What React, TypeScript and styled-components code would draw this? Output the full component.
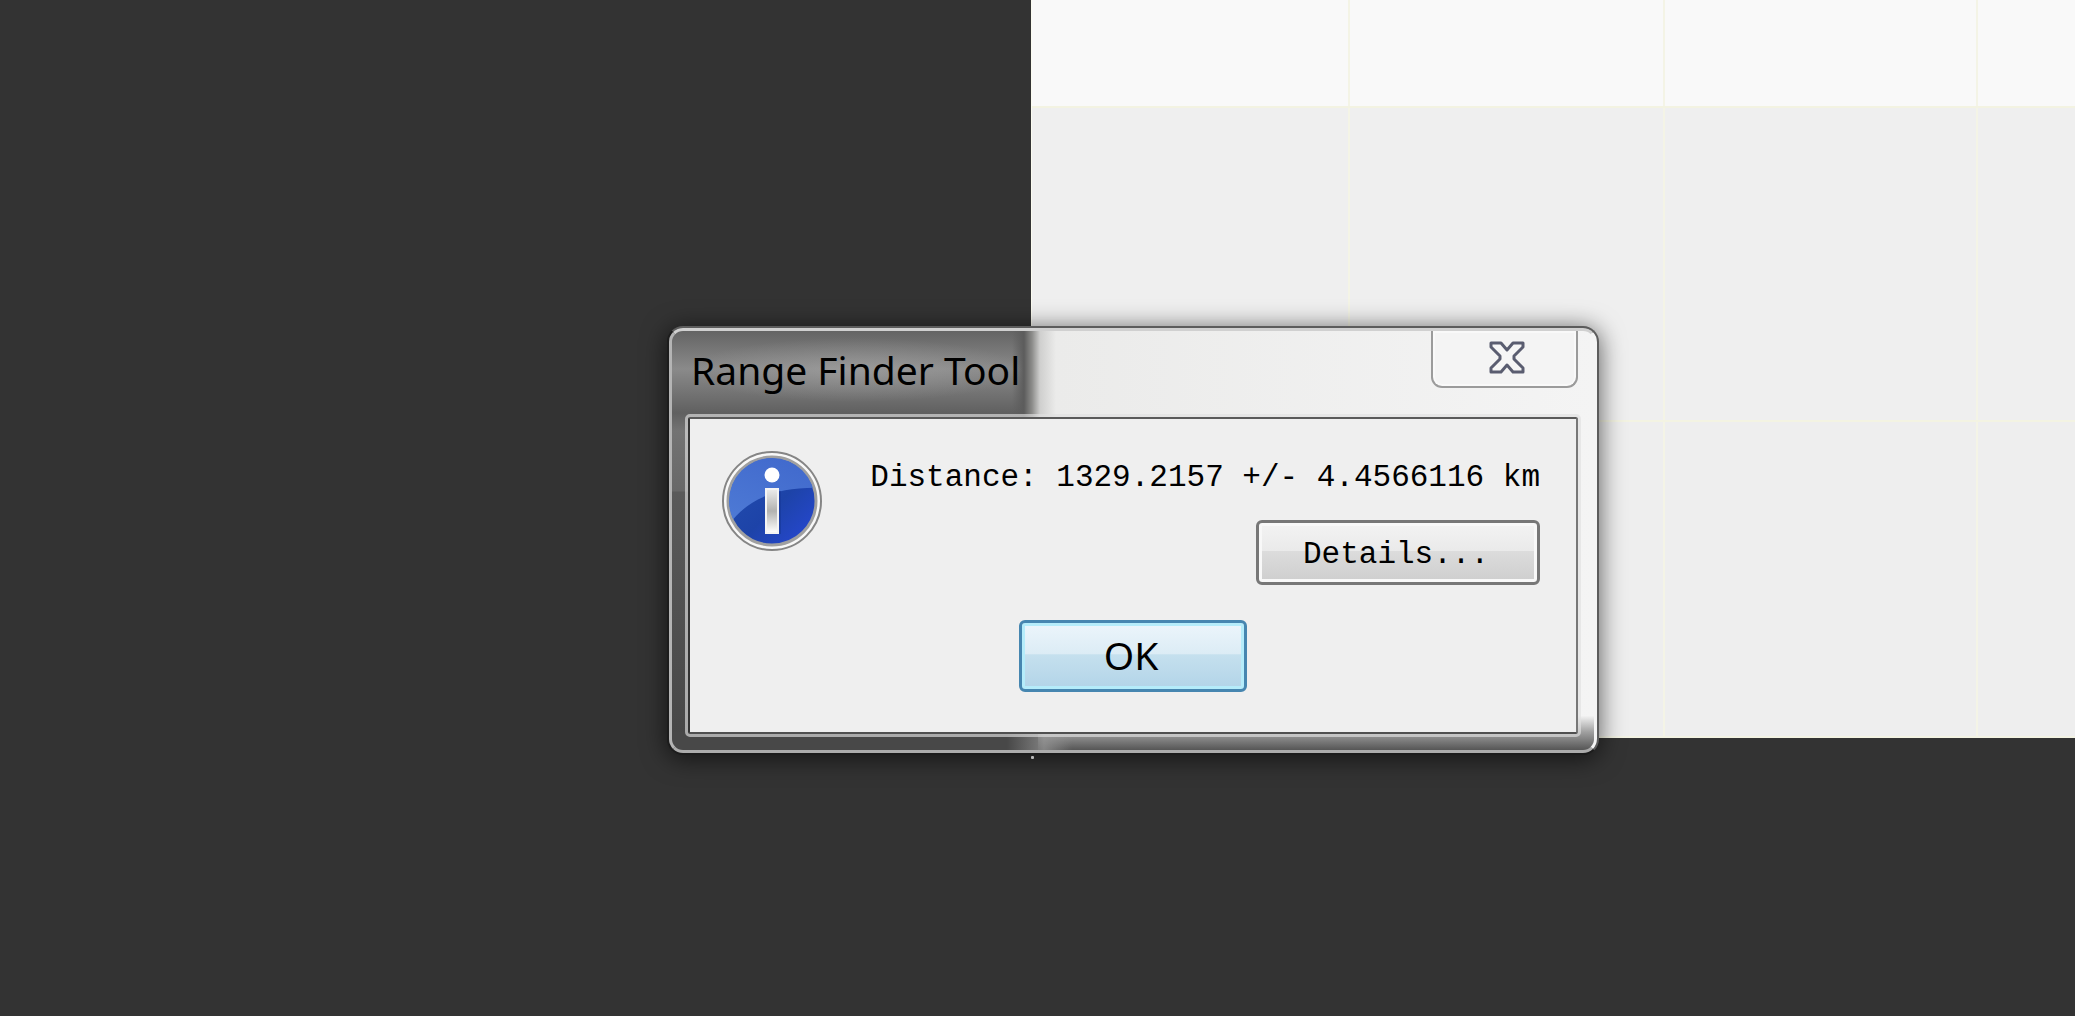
import React from 'react';
import styled, { createGlobalStyle } from 'styled-components';

const GlobalStyle = createGlobalStyle`
  *, *::before, *::after { box-sizing: border-box; }
  body { margin: 0; background: #333333; }
`;

const uiFont = "'Noto Sans', 'Open Sans', sans-serif";
const monoFont = "'Liberation Mono', 'Noto Sans CJK SC', monospace";

const Desktop = styled.main`
  position: relative;
  min-height: 100vh;
  display: grid;
  grid-template-columns: 1031px 1fr;
  align-items: start;
  overflow: hidden;
  background: #333333;
`;

const MapCanvas = styled.section`
  grid-column: 2;
  height: 738px;
  display: grid;
  grid-template-rows: 106px 314px 1fr;
  background: #efefef;
  border-left: 1px solid #fbfbf0;
  border-bottom: 2px solid #f3f3e4;
`;

const MapRow = styled.div<{ $tone: string }>`
  display: grid;
  grid-template-columns: 316px 315px 313px 1fr;
  background: ${(p) => p.$tone};
  & + & { border-top: 2px solid #f3f3e2; }
`;

const MapTile = styled.div`
  & + & { border-left: 2px solid #f4f4e6; }
`;

const MapDot = styled.span`
  position: absolute;
  left: 1031px;
  top: 756px;
  width: 3px;
  height: 3px;
  border-radius: 1px;
  background: #b8b8b8;
`;

const Window = styled.section`
  position: absolute;
  left: 667px;
  top: 326px;
  width: 932px;
  border: 2px solid;
  border-color: #5c5c5c #5c5c5c #1c1c1c #1c1c1c;
  border-radius: 16px;
  box-shadow: 0 3px 24px 1px rgba(0, 0, 0, 0.6);
  background: #1c1c1c;
`;

const Glass = styled.div`
  overflow: hidden;
  border: 3px solid;
  border-color: #d0d0d0 #f4f4f4 #acacac #b4b4b4;
  border-radius: 14px;
  padding: 0 16px 16px 16px;
  background:
    linear-gradient(to right, #484848 0, #484848 335px, rgba(150, 150, 150, 0.7) 372px, transparent 400px)
      bottom / 100% 18px no-repeat,
    linear-gradient(to right, rgba(88, 88, 88, 0) 340px, #5c5c5c 352px, #8c8c8a 360px, #cfcfce 368px, #ebebea 384px, #f4f4f4 100%)
      top / 100% calc(100% - 34px) no-repeat,
    linear-gradient(to bottom, #f2f2f2 0, #a0a0a0 16px, #565656 34px) right bottom / calc(100% - 366px) 34px no-repeat,
    linear-gradient(to bottom, #646464 0, #8a8a8a 38px, #606060 82px, #737373 100px, #686868 160px, #5a5a5a 161px, #464646 100%);
`;

const TitleBar = styled.header`
  display: flex;
  align-items: flex-start;
  justify-content: space-between;
  height: 86px;
`;

const Title = styled.h1`
  margin: 7px 0 0;
  padding: 0 3px;
  font: 400 39px/64px ${uiFont};
  color: #000;
  white-space: nowrap;
  background: radial-gradient(closest-side, rgba(170, 170, 170, 0.5), rgba(150, 150, 150, 0));
`;

const CloseButton = styled.button`
  width: 147px;
  height: 57px;
  padding: 0 0 2px 4px;
  display: flex;
  align-items: center;
  justify-content: center;
  border: 2px solid #9b9b9b;
  border-top: 0;
  border-radius: 0 0 11px 11px;
  background: #f4f4f4;
  box-shadow: inset 0 0 0 2px #f9f9f9;
`;

const Client = styled.div`
  border: 2px solid;
  border-color: #5a5a5a #777777 #505050 #333333;
  outline: 3px solid rgba(225, 225, 225, 0.65);
  border-radius: 2px;
  padding: 31px 36px 40px 31px;
  background: #efefef;
`;

const Message = styled.div`
  display: flex;
  align-items: flex-start;
  justify-content: space-between;
`;

const MessageBody = styled.div`
  display: flex;
  flex-direction: column;
  align-items: flex-end;
  padding-top: 2px;
`;

const Distance = styled.p`
  margin: 0;
  font: 400 31px/52px ${monoFont};
  color: #000;
  white-space: nowrap;
`;

const PushButton = styled.button<{ $primary?: boolean }>`
  display: block;
  width: ${(p) => (p.$primary ? 228 : 284)}px;
  height: ${(p) => (p.$primary ? 72 : 65)}px;
  margin: ${(p) => (p.$primary ? '35px 0 0 298px' : '16px 0 0')};
  padding: ${(p) => (p.$primary ? '0 4px 2px 0' : '4px 4px 0 0')};
  border: 3px solid ${(p) => (p.$primary ? '#4686b0' : '#777777')};
  border-radius: 6px;
  color: #000;
  font: ${(p) => (p.$primary ? `400 39px/60px ${uiFont}` : `400 31px/52px ${monoFont}`)};
  box-shadow: inset 0 0 0 3px ${(p) => (p.$primary ? '#b5ecfa' : '#f8f8f8')};
  background: ${(p) =>
    p.$primary
      ? 'linear-gradient(#ecf5fb, #dcecf5 47%, #c5e0ee 48%, #b2d4e8)'
      : 'linear-gradient(#f3f3f3, #eaeaea 47%, #dcdcdc 48%, #cecece)'};
`;

const InfoIcon = () => (
  <svg width="102" height="102" viewBox="0 0 102 102" role="img" aria-label="Information">
    <defs>
      <linearGradient id="disc" x1="0" y1="0" x2="1" y2="1">
        <stop offset="0" stopColor="#2450b0" />
        <stop offset="0.55" stopColor="#1d43a8" />
        <stop offset="1" stopColor="#2848d8" />
      </linearGradient>
      <linearGradient id="shine" x1="0.2" y1="1" x2="0.7" y2="0">
        <stop offset="0" stopColor="#4f7cd6" />
        <stop offset="1" stopColor="#4068cc" />
      </linearGradient>
      <linearGradient id="stem" x1="0" y1="0" x2="0" y2="1">
        <stop offset="0" stopColor="#ececec" />
        <stop offset="0.5" stopColor="#b2b2b0" />
        <stop offset="1" stopColor="#ffffff" />
      </linearGradient>
      <clipPath id="discClip"><circle cx="51" cy="51" r="43" /></clipPath>
    </defs>
    <circle cx="51" cy="51" r="49" fill="#f8f8f8" stroke="#858585" strokeWidth="2" />
    <circle cx="51" cy="51" r="44" fill="url(#disc)" stroke="#a0a0a0" strokeWidth="3" />
    <g clipPath="url(#discClip)">
      <path d="M0 86C18 57 42 36 102 38V0H0Z" fill="url(#shine)" />
    </g>
    <rect x="46" y="41" width="14" height="43" fill="#17399a" opacity="0.65" />
    <rect x="45" y="39" width="12" height="44" fill="url(#stem)" stroke="#f4f4f4" strokeWidth="2" />
    <circle cx="51" cy="25" r="7.5" fill="#ffffff" />
  </svg>
);

const CloseIcon = () => (
  <svg width="36" height="33" viewBox="0 0 36 33" aria-hidden="true">
    <path
      d="M2 2H12L18 9L24 2H34V6L25 15V18L34 27V31H24L18 24L12 31H2V27L11 18V15L2 6Z"
      fill="#f6f6f6"
      stroke="#5a5d70"
      strokeWidth="3"
      strokeLinejoin="round"
    />
  </svg>
);

const tones = ['#f9f9f9', '#efefef', '#eeeeee'];

export default function App() {
  return (
    <>
      <GlobalStyle />
      <Desktop>
        <MapCanvas aria-label="Map">
          {tones.map((tone) => (
            <MapRow key={tone} $tone={tone}>
              <MapTile />
              <MapTile />
              <MapTile />
              <MapTile />
            </MapRow>
          ))}
        </MapCanvas>
        <Window role="dialog" aria-labelledby="dialog-title">
          <Glass>
            <TitleBar>
              <Title id="dialog-title">Range Finder Tool</Title>
              <CloseButton aria-label="Close">
                <CloseIcon />
              </CloseButton>
            </TitleBar>
            <Client>
              <Message>
                <InfoIcon />
                <MessageBody>
                  <Distance>Distance: 1329.2157 +/- 4.4566116 km</Distance>
                  <PushButton>Details...</PushButton>
                </MessageBody>
              </Message>
              <PushButton $primary>OK</PushButton>
            </Client>
          </Glass>
        </Window>
        <MapDot />
      </Desktop>
    </>
  );
}
